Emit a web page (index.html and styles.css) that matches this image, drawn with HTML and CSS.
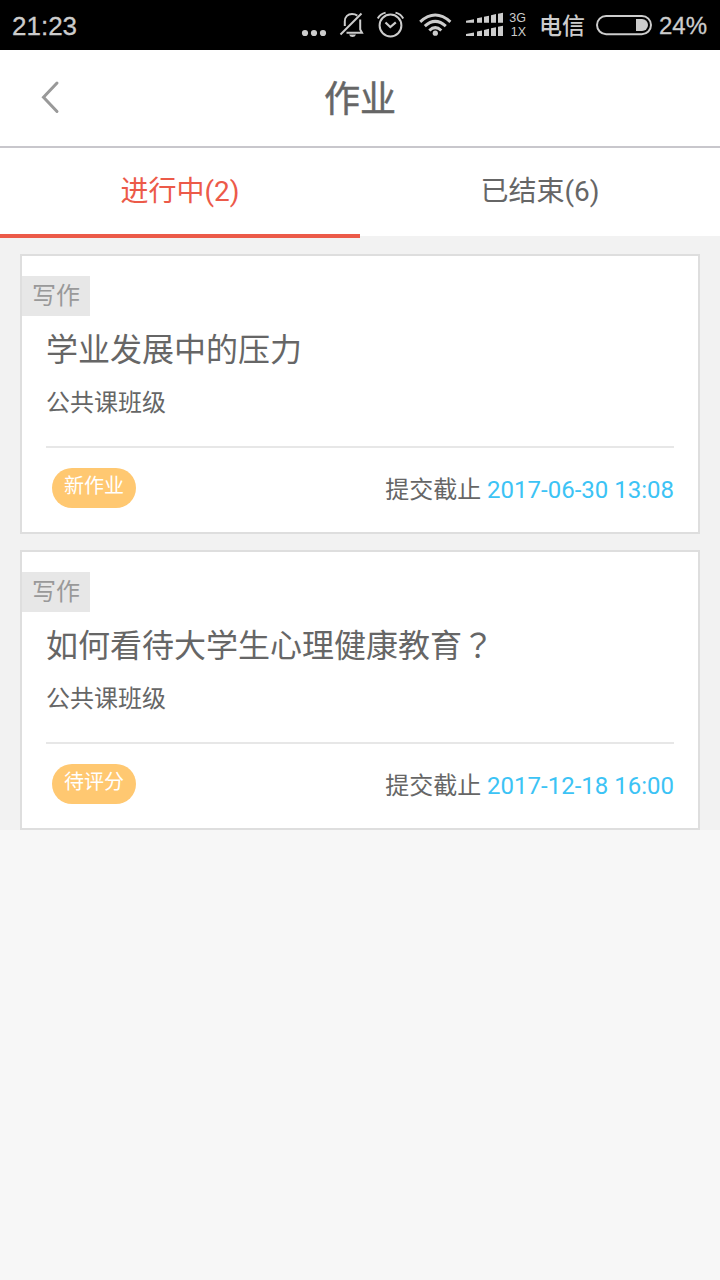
FILE: index.html
```html
<!DOCTYPE html>
<html lang="zh-CN">
<head>
<meta charset="utf-8">
<title>作业</title>
<link rel="stylesheet" href="styles.css">
</head>
<body>
<div class="status-bar">
  <span class="clock">21:23</span>
  <svg class="dots" width="26" height="50" viewBox="301 0 26 50"><g fill="#ccc"><circle cx="305" cy="33" r="3.1"/><circle cx="314" cy="33" r="3.1"/><circle cx="323" cy="33" r="3.1"/></g></svg>
  <svg class="bell" width="26" height="50" viewBox="339 0 26 50"><g fill="none" stroke="#ccc" stroke-width="2"><path d="M361.500 13.500L340.500 34.500"/><path d="M344.800 26V21.500C344.800 16.500 348 14 352 14C354.500 14 356 14.600 357.300 15.600M360.200 19.500V29.500L362 32.800H346.500"/></g><path d="M349 34.500H356Q355 37 352.500 37Q350 37 349 34.500Z" fill="#ccc"/></svg>
  <svg class="alarm" width="28" height="50" viewBox="377 0 28 50"><g fill="none" stroke="#ccc" stroke-width="2"><circle cx="390.500" cy="25.500" r="10.900"/><path d="M385.500 22.500L390.300 27L395.800 22.300" stroke-width="2.200"/><path d="M377.800 18.500Q380 14 385.600 12.600M395.500 12.600Q401 14 403.200 18.500"/></g></svg>
  <svg class="wifi" width="34" height="50" viewBox="418 0 34 50"><g fill="none" stroke="#ccc" stroke-width="3"><path d="M420.200 21.800Q435.200 8.200 450.400 21.800"/><path d="M424.800 26.200Q435.200 16.600 445.800 26.200"/><path d="M429.300 30.500Q435.200 24.800 441.300 30.500"/></g><circle cx="435.300" cy="33.200" r="2.600" fill="#ccc"/></svg>
  <svg class="signal" width="38" height="50" viewBox="466 0 38 50"><g fill="#ccc"><path id="bars" d="M466 20.800L474 19.300V22.800H466ZM477 18.300L482 17.300V22.800H477ZM484 16.800L489 15.700V22.800H484ZM491 15.200L496 14.100V22.800H491ZM498 13.700L503 12.700V22.800H498Z"/><use href="#bars" y="13.100"/></g></svg>
  <span class="network"><span>3G</span><span>1X</span></span>
  <span class="carrier">电信</span>
  <svg class="battery" width="56" height="50" viewBox="596 0 56 50"><rect x="597" y="16" width="54" height="18.200" rx="9.100" fill="none" stroke="#ccc" stroke-width="2"/><path d="M636 19H642A6 6 0 0 1 642 31H636Z" fill="#ccc"/></svg>
  <span class="percent">24%</span>
</div>
<header class="header">
  <svg class="back" width="24" height="40" viewBox="38 78 24 40"><path d="M57 83L43.500 97.200L57 111.500" fill="none" stroke="#999" stroke-width="3" stroke-linecap="round"/></svg>
  <h1 class="heading">作业</h1>
</header>
<nav class="tabs">
  <a class="tab tab-active">进行中(2)</a>
  <a class="tab">已结束(6)</a>
</nav>
<main class="list">
  <article class="card">
    <span class="tag">写作</span>
    <h2 class="title">学业发展中的压力</h2>
    <p class="group">公共课班级</p>
    <footer class="card-footer">
      <span class="pill">新作业</span>
      <span class="deadline">提交截止 <time class="date">2017-06-30 13:08</time></span>
    </footer>
  </article>
  <article class="card">
    <span class="tag">写作</span>
    <h2 class="title">如何看待大学生心理健康教育<span class="mark" lang="zh-TW">？</span></h2>
    <p class="group">公共课班级</p>
    <footer class="card-footer">
      <span class="pill">待评分</span>
      <span class="deadline">提交截止 <time class="date">2017-12-18 16:00</time></span>
    </footer>
  </article>
</main>
</body>
</html>
```
FILE: styles.css
```css
* { box-sizing: border-box; }
body {
  margin: 0;
  min-height: 1280px;
  background: #f7f7f7;
  color: #666;
  font-family: Roboto, "Noto Sans CJK SC", sans-serif;
}
.status-bar {
  display: flex;
  height: 50px;
  padding-left: 12px;
  background: #000;
  color: #ccc;
  font-family: "Liberation Sans", "Noto Sans CJK SC", sans-serif;
  line-height: 52px;
  white-space: nowrap;
}
.status-bar > * { flex: none; }
.clock { width: 289px; font-size: 26px; -webkit-text-stroke: 0.3px #ccc; }
.bell { margin-left: 12px; }
.alarm { margin-left: 12px; }
.wifi { margin-left: 13px; }
.signal { margin-left: 14px; }
.network {
  display: flex;
  flex-direction: column;
  align-items: flex-end;
  width: 18px;
  margin-left: 4px;
  padding-top: 11px;
  font-size: 12.5px;
  line-height: 14px;
}
.carrier { width: 48px; margin-left: 13px; font-size: 23px; font-weight: 500; line-height: 52px; }
.battery { margin-left: 9px; }
.percent { margin-left: 7px; font-size: 24px; -webkit-text-stroke: 0.3px #ccc; }
.header {
  display: grid;
  grid-template-columns: 86px 1fr 86px;
  align-items: center;
  height: 98px;
  border-bottom: 2px solid #c8c7cc;
  background: #fff;
}
.back { margin-left: 38px; }
.heading {
  margin: 0;
  padding-top: 4px;
  font-size: 36px;
  font-weight: 400;
  line-height: 92px;
  text-align: center;
  -webkit-text-stroke: 0.5px #666;
}
.tabs { display: flex; height: 88px; background: #fff; }
.tab { flex: 1; height: 90px; font-size: 28px; line-height: 87px; text-align: center; }
.tab-active { border-bottom: 4px solid #ec5a49; color: #ec5a49; }
.list {
  display: flex;
  flex-direction: column;
  gap: 16px;
  padding: 18px 20px 0;
  background: #f2f2f2;
}
.card {
  display: flex;
  flex-direction: column;
  height: 280px;
  padding: 20px 24px 0;
  border: 2px solid #dedede;
  background: #fff;
}
.tag {
  align-self: flex-start;
  width: 68px;
  height: 40px;
  margin-left: -24px;
  background: #e7e7e7;
  color: #999;
  font-size: 24px;
  line-height: 41px;
  text-align: center;
}
.title { margin: 10px 0 0; font-size: 32px; font-weight: 400; line-height: 48px; }
.mark { font-family: "Noto Sans CJK TC", sans-serif; line-height: 1; }
.group { height: 72px; margin: 0; padding-top: 12px; font-size: 24px; line-height: 34px; }
.card-footer {
  display: flex;
  justify-content: space-between;
  align-items: flex-start;
  padding: 20px 0 0 6px;
  border-top: 2px solid #e7e7e7;
}
.pill {
  width: 84px;
  height: 40px;
  border-radius: 20px;
  background: #ffc871;
  color: #fff;
  font-size: 20px;
  line-height: 36px;
  text-align: center;
}
.deadline { font-size: 24px; line-height: 45px; }
.date { color: #3cc3f5; }
```
